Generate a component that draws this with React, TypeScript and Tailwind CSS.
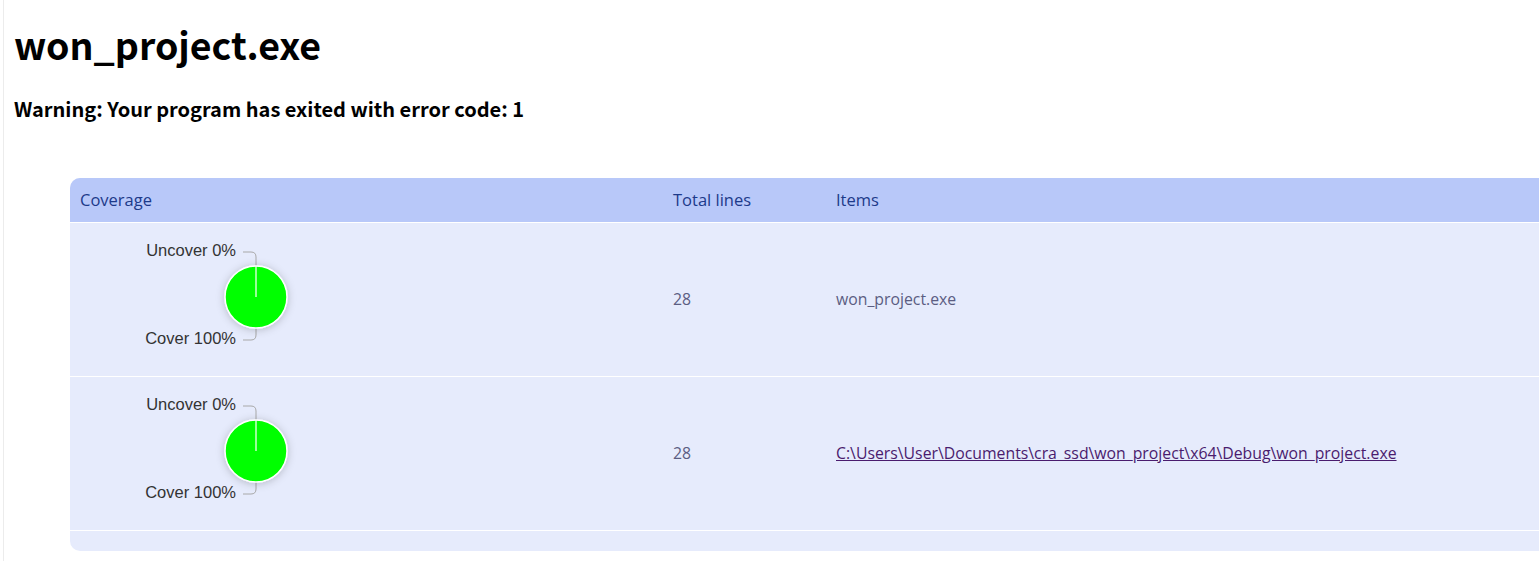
import React from 'react';

const rows = [
    { lines: 28, item: 'won_project.exe', link: false },
    { lines: 28, item: 'C:\\Users\\User\\Documents\\cra_ssd\\won_project\\x64\\Debug\\won_project.exe', link: true },
];

function CoveragePie() {
    return (
        <svg width="230" height="121" viewBox="0 0 230 121" className="block">
            <defs>
                <filter id="pieShadow" x="-50%" y="-50%" width="200%" height="200%">
                    <feDropShadow dx="0" dy="1" stdDeviation="4" floodColor="#000" floodOpacity="0.22" />
                </filter>
            </defs>
            <text x="156" y="17" textAnchor="end" fontFamily="'Liberation Sans', Arial, sans-serif" fontSize="16.5" fill="#333">
                Uncover 0%
            </text>
            <text x="156" y="105" textAnchor="end" fontFamily="'Liberation Sans', Arial, sans-serif" fontSize="16.5" fill="#333">
                Cover 100%
            </text>
            <path d="M163 13 H171 Q176 13 176 18 V27" fill="none" stroke="#a8a8a8" strokeWidth="1" />
            <path d="M163 101 H171 Q176 101 176 96 V89" fill="none" stroke="#a8a8a8" strokeWidth="1" />
            <circle cx="176" cy="58" r="31" fill="#00ff00" stroke="#ffffff" strokeWidth="1.5" filter="url(#pieShadow)" />
            <line x1="176" y1="27" x2="176" y2="58" stroke="#ffffff" strokeWidth="1.2" />
        </svg>
    );
}

export default function App() {
    return (
        <div className="w-screen h-[561px] overflow-hidden bg-white">
            <div className="ml-[3px] h-full border-l border-[#ececec] pl-[10px]" style={{ fontFamily: "'Noto Sans CJK KR', 'Noto Sans', sans-serif" }}>
                <h1 className="pt-[20px] text-[37.5px] leading-[48px] font-bold text-black">won_project.exe</h1>
                <p className="mt-[28px] text-[20px] leading-[26px] font-bold text-black">
                    Warning: Your program has exited with error code: 1
                </p>

                <div
                    className="mt-[56px] ml-[56px] w-[1520px] rounded-[10px] overflow-hidden bg-[#e6ebfc]"
                    style={{ fontFamily: "'Open Sans', 'Noto Sans', sans-serif" }}
                >
                    <div className="grid grid-cols-[593px_163px_1fr] h-[45px] items-center bg-[#b8c8f9] text-[16.5px] text-[#1d3a8a] border-b border-white">
                        <div className="pl-[10px]">Coverage</div>
                        <div className="pl-[10px]">Total lines</div>
                        <div className="pl-[10px]">Items</div>
                    </div>

                    {rows.map((r, i) => (
                        <div
                            key={i}
                            className="grid grid-cols-[593px_163px_1fr] h-[154px] items-center border-b border-white text-[15.8px] text-[#5b5d82]"
                        >
                            <div className="pl-[10px]">
                                <CoveragePie />
                            </div>
                            <div className="pl-[10px]">{r.lines}</div>
                            <div className="pl-[10px]">
                                {r.link ? (
                                    <a href="#" className="underline text-[#4a1c6e]">
                                        {r.item}
                                    </a>
                                ) : (
                                    r.item
                                )}
                            </div>
                        </div>
                    ))}

                    <div className="h-[20px]" />
                </div>
            </div>
        </div>
    );
}
